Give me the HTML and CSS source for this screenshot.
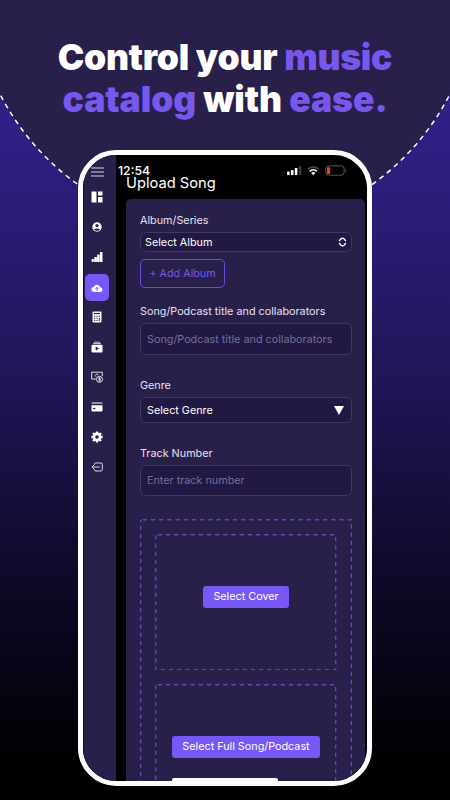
FILE: index.html
```html
<!DOCTYPE html>
<html lang="en">
<head>
  <meta charset="UTF-8" />
  <meta name="viewport" content="width=device-width, initial-scale=1.0"/>
  <title>Upload Song</title>
  <link rel="stylesheet" href="styles.css">
</head>
<body>
  <svg class="backdrop" viewBox="0 0 450 800">
    <circle cx="225" cy="-21" r="252.7" fill="#281f4a"/>
    <circle cx="225" cy="-21" r="252.7" fill="none" stroke="#fff" stroke-width="1.5" stroke-dasharray="5 4.4"/>
  </svg>

  <h1 class="headline">
    <span class="line line-1">Control your <em>music</em></span>
    <span class="line line-2"><em>catalog</em> with <em>ease.</em></span>
  </h1>

  <div class="phone">
    <nav class="sidebar">
      <a class="menu"><svg width="13" height="10" viewBox="0 0 13 10" stroke="#d9d6e4" stroke-width="1.2"><path d="M0 1h13M0 5h13M0 9h13"/></svg></a>
      <a><svg width="12" height="12" viewBox="0 0 12 12" fill="#fff"><path d="M.5.5h5v11h-5zM7 .5h4.500v4H7zM7 6h4.500v5.500H7z"/></svg></a>
      <a><svg width="12" height="12" viewBox="0 0 12 12"><circle cx="6" cy="6" r="4.700" fill="#fff"/><circle cx="6" cy="4.600" r="1.600" fill="#281f4a"/><path d="M2.900 8.300a3.700 2 0 0 1 6.200 0 3.700 3.700 0 0 1-6.200 0z" fill="#281f4a"/></svg></a>
      <a><svg width="12" height="12" viewBox="0 0 12 12" fill="#fff"><rect x=".6" y="8" width="2.300" height="3" rx=".8"/><rect x="3.200" y="6" width="2.700" height="5" rx=".5"/><rect x="6.100" y="3.600" width="2.600" height="7.400" rx=".5"/><rect x="8.900" y="1" width="2.600" height="10" rx=".5"/></svg></a>
      <a class="active"><svg width="12" height="12" viewBox="0 0 12 12"><path d="M3 10a2.500 2.500 0 0 1-.2-5A3.400 3.400 0 0 1 9.200 5.200 2.400 2.400 0 0 1 9 10z" fill="#fff"/><path d="M6 8.800V5.500M4.500 6.900 6 5.400l1.500 1.500" fill="none" stroke="#7857f7" stroke-width="1"/></svg></a>
      <a><svg width="12" height="12" viewBox="0 0 12 12"><rect x="1.500" y=".5" width="9" height="11" rx="1" fill="#fff"/><path d="M3 2.500h6" stroke="#281f4a" stroke-width="1.200"/><path d="M3 5.200h1.300M5.400 5.200h1.300M7.700 5.200H9M3 7.300h1.300M5.400 7.300h1.300M3 9.400h1.300M5.400 9.400h1.300M8.350 6.800v3.100" stroke="#281f4a" stroke-width="1"/></svg></a>
      <a><svg width="12" height="12" viewBox="0 0 12 12"><path d="M3.200 1.200h5.600M2 2.600h8" stroke="#cfcbdc" stroke-width="1"/><rect x=".5" y="3.700" width="11" height="7.800" rx="1" fill="#fff"/><path d="M4.700 5.400v4.200l3.400-2.100z" fill="#281f4a"/></svg></a>
      <a><svg width="12" height="12" viewBox="0 0 12 12" fill="none" stroke="#e2dfeb" stroke-width="1"><path d="M5 8H.7V1.200h10.600V5"/><path d="M7.300 4.200a1.400 1.400 0 1 0-2.200 1.500"/><circle cx="8.500" cy="8.300" r="3"/><path d="M9.600 7.200c-.5-.7-2-.6-2 .2s2 .8 2 1.600-1.500 1-2.100.2M8.500 6.400v4"/></svg></a>
      <a><svg width="12" height="12" viewBox="0 0 12 12" fill="#fff"><path d="M1.300 1.500h9.400q.8 0 .8 1H.5q0-1 .8-1zM.5 4.200h11v5.500q0 .8-.8.800H1.300q-.8 0-.8-.8z"/><path d="M2 7.500h2.400" stroke="#281f4a" stroke-width="1.300"/></svg></a>
      <a><svg width="12" height="12" viewBox="0 0 12 12"><circle cx="6" cy="6" r="3.100" fill="none" stroke="#fff" stroke-width="2.600"/><path d="M6 .4v2M6 9.600v2M.4 6h2M9.600 6h2M2 2l1.500 1.500M8.500 8.500 10 10M2 10l1.500-1.500M8.500 3.500 10 2" stroke="#fff" stroke-width="2.300"/></svg></a>
      <a><svg width="12" height="12" viewBox="0 0 12 12" fill="none" stroke="#d9d6e4" stroke-width="1"><path d="M3.500 3.800V3q0-1 1-1H10q1.300 0 1.300 1.200v5.600Q11.300 10 10 10H4.500q-1 0-1-1v-.8M8.700 6H1M3 4 1 6l2 2"/></svg></a>
    </nav>

    <main class="content">
      <div class="status">
        <span class="time">12:54</span>
        <svg width="60" height="12" viewBox="0 0 60 12">
          <g fill="#fff"><rect x="0" y="6.500" width="2.600" height="3.500" rx=".6"/><rect x="3.900" y="5" width="2.600" height="5" rx=".6"/><rect x="7.800" y="3" width="2.600" height="7" rx=".6"/></g>
          <rect x="11.800" y="1" width="2.600" height="9" rx=".6" fill="#38383a"/>
          <g fill="none" stroke-width="1.700"><path d="M20.800 4.300a8 8 0 0 1 11 0" stroke="#444"/><path d="M22.800 6.400a5 5 0 0 1 7 0" stroke="#fff"/></g>
          <path d="M24.200 8.100a3 3 0 0 1 4.200 0l-2.100 2.100z" fill="#fff"/>
          <rect x="38.700" y=".9" width="18.500" height="9.300" rx="3" fill="none" stroke="#58585a" stroke-width="1"/>
          <rect x="40" y="2.200" width="3.200" height="6.700" rx="1.200" fill="#fb3a30"/>
          <path d="M58.500 4v3.200q1-.4 1-1.600t-1-1.600z" fill="#58585a"/>
        </svg>
      </div>
      <h2 class="title">Upload Song</h2>

      <form class="card">
        <label>Album/Series</label>
        <div class="field field-album"><span>Select Album</span>
          <svg width="9" height="10" viewBox="0 0 9 10" fill="none" stroke="#fff" stroke-width="1.400"><path d="M1.200 4 2.700 2Q4.500.6 6.300 2L7.800 4M1.200 6l1.500 2q1.800 1.400 3.600 0L7.800 6"/></svg>
        </div>
        <div class="add">+ Add Album</div>

        <label>Song/Podcast title and collaborators</label>
        <div class="field field-song"><span>Song/Podcast title and collaborators</span></div>

        <label>Genre</label>
        <div class="field field-genre"><span>Select Genre</span>
          <svg width="10" height="9" viewBox="0 0 10 9" fill="#fff"><path d="M0 0h10L5 9z"/></svg>
        </div>

        <label>Track Number</label>
        <div class="field field-track"><span>Enter track number</span></div>

        <div class="uploads">
          <svg class="dashes"><rect x=".7" y=".7" width="210.600" height="300"/></svg>
          <div class="drop">
            <svg class="dashes"><rect x=".7" y=".7" width="180" height="135"/></svg>
            <div class="btn btn-cover">Select Cover</div>
          </div>
          <div class="drop">
            <svg class="dashes"><rect x=".7" y=".7" width="180" height="135"/></svg>
            <div class="btn btn-full">Select Full Song/Podcast</div>
          </div>
        </div>
      </form>
    </main>
    <div class="home-bar"></div>
  </div>
</body>
</html>
```
FILE: styles.css
```css
* {
  box-sizing: border-box;
}

body {
  margin: 0;
  width: 450px;
  height: 800px;
  overflow: hidden;
  position: relative;
  background: linear-gradient(180deg, #35228f 0%, #311f85 15%, #2c1c79 25%, #20165a 46%, #150e39 63%, #08061b 80%, #010104 94%, #000 100%);
  color: #fff;
  font-family: Inter, sans-serif;
}

svg {
  display: block;
}

.backdrop {
  position: absolute;
  top: 0;
  left: 0;
  width: 450px;
  height: 800px;
}

.headline {
  position: relative;
  margin: 0;
  height: 150px;
  padding-top: 37px;
  text-align: center;
  font-size: 35.5px;
  font-weight: 900;
  line-height: 42px;
}

.headline em {
  font-style: normal;
  color: #7857ed;
}

.line {
  display: block;
  white-space: nowrap;
}

.line-1 {
  letter-spacing: -0.25px;
}

.line-2 {
  letter-spacing: -0.05px;
}

.phone {
  position: relative;
  display: flex;
  width: 294px;
  height: 636px;
  margin-left: 78px;
  border: 5px solid #fff;
  border-radius: 38px;
  background: #000;
  overflow: hidden;
}

.sidebar {
  flex: none;
  width: 33px;
  padding: 2px 2px 0;
  background: #281f4a;
  border-left: 1px solid #110b2b;
}

.sidebar a {
  display: flex;
  justify-content: center;
  align-items: center;
  width: 24px;
  height: 26px;
  margin: 0 0 4px -1px;
}

.sidebar .menu {
  height: 30px;
  margin-bottom: -3px;
}

.sidebar .active {
  height: 27px;
  margin-bottom: 3px;
  border-radius: 5px;
  background: #7857f7;
}

.content {
  flex: none;
  width: 249px;
  padding-left: 10px;
}

.status {
  display: flex;
  justify-content: space-between;
  height: 20px;
  padding: 10px 18px 0 0;
  margin-left: -8px;
}

.time {
  font-size: 12.3px;
  font-weight: 500;
  line-height: 12px;
}

.title {
  position: relative;
  margin: 0;
  height: 24px;
  line-height: 17px;
  font-size: 14.7px;
  font-weight: 400;
}

.card {
  height: 600px;
  padding: 14px 13px 0 14px;
  border-radius: 5px 5px 0 0;
  background: #281f4a;
  font-size: 10.8px;
}

label {
  display: block;
  height: 19px;
  line-height: 15px;
  color: #e6e3ef;
  white-space: nowrap;
}

.field {
  display: flex;
  justify-content: space-between;
  align-items: center;
  width: 212px;
  padding: 0 7px 0 6px;
  border: 1px solid #413861;
  border-radius: 6px;
  background: #211944;
  white-space: nowrap;
}

.field-album {
  height: 20px;
  padding: 0 4px;
}

.add {
  width: 85px;
  height: 29px;
  margin: 7px 0 16px;
  border: 1px solid #6a4edb;
  border-radius: 5px;
  color: #7857ed;
  line-height: 27px;
  text-align: center;
}

.field-song {
  height: 32px;
  margin-bottom: 23px;
}

.field-genre {
  height: 26px;
  margin-bottom: 23px;
}

.field-track {
  height: 31px;
  margin-bottom: 23px;
}

.field-song,
.field-track {
  color: #746f96;
}

.uploads {
  position: relative;
  width: 212px;
  height: 300px;
  padding: 15px 15px 0;
}

.drop {
  position: relative;
  display: flex;
  justify-content: center;
  align-items: center;
  width: 182px;
  height: 136px;
  padding-bottom: 10px;
  margin-bottom: 14px;
}

.dashes {
  position: absolute;
  top: 0;
  left: 0;
  width: 100%;
  height: 100%;
  fill: none;
  stroke: #6545c4;
  stroke-width: 1.4px;
  stroke-dasharray: 4.2 4;
  stroke-dashoffset: -2px;
}

.btn {
  height: 22px;
  border-radius: 3px;
  background: #7857f7;
  line-height: 22px;
  text-align: center;
  white-space: nowrap;
}

.btn-cover {
  width: 86px;
}

.btn-full {
  width: 148px;
}

.home-bar {
  position: absolute;
  left: 89px;
  bottom: 0;
  width: 106px;
  height: 3px;
  border-radius: 2px 2px 0 0;
  background: #fff;
}
```
